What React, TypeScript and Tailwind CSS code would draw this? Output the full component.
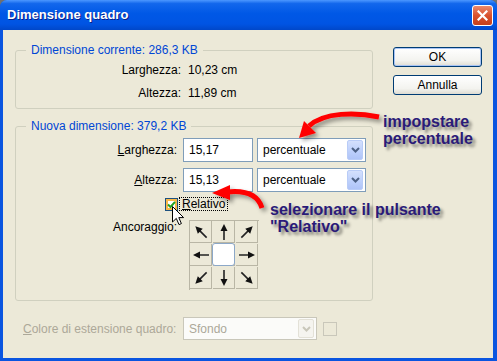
import React from "react";

function Chevron({ color }: { color: string }) {
  return (
    <svg width="9" height="6" viewBox="0 0 9 6">
      <path d="M1 1 L4.5 4.5 L8 1" fill="none" stroke={color} strokeWidth="2" />
    </svg>
  );
}

function Dropdown({ value, disabled, width }: { value: string; disabled?: boolean; width: string }) {
  return (
    <div
      className={
        "flex items-center h-full pl-[5px] pr-[2px] " +
        width +
        (disabled ? " border border-[#C9C7BA] bg-[#fbfbf9] text-[#ACA899]" : " border border-[#7F9DB9] bg-white")
      }
    >
      <span className="flex-1">{value}</span>
      {disabled ? (
        <div className="w-[16px] h-[19px] rounded-[2px] border border-[#E3E1D7] bg-[#F5F4EF] flex items-center justify-center">
          <Chevron color="#C9C7BA" />
        </div>
      ) : (
        <div className="w-[16px] h-[20px] rounded-[2px] border border-[#B9CCF7] bg-[linear-gradient(180deg,#d4e0fd_0%,#bccffb_60%,#afc4f7_100%)] flex items-center justify-center">
          <Chevron color="#4D6185" />
        </div>
      )}
    </div>
  );
}

function AnchorArrow({ rot }: { rot: string }) {
  return (
    <div className="w-[22px] h-[22px] border-r border-b border-[#B9B6A5] flex items-center justify-center">
      <svg width="18" height="18" viewBox="0 0 18 18" className={rot}>
        <line x1="9" y1="17" x2="9" y2="6" stroke="#222" strokeWidth="1.6" />
        <polygon points="9,1 5.5,8 12.5,8" fill="#111" />
      </svg>
    </div>
  );
}

export default function App() {
  return (
    <div className="relative w-[497px] h-[361px] overflow-hidden bg-[#707070] font-['Liberation_Sans',Arial,sans-serif] text-[12px] leading-[14px] text-black">
      <div className="flex flex-col w-full h-full rounded-t-[7px] overflow-hidden bg-[#0a55e0]">
        {/* title bar */}
        <div className="h-[30px] shrink-0 flex items-center pl-[7px] pr-[4px] bg-[linear-gradient(180deg,#4c97ff_0%,#1267ec_12%,#0058e6_45%,#0054e3_80%,#0047c9_100%)]">
          <span className="flex-1 text-white font-bold text-[13px] [text-shadow:1px_1px_0_#0a1e8a]">
            Dimensione quadro
          </span>
          <div className="w-[21px] h-[21px] rounded-[3px] border border-white bg-[linear-gradient(180deg,#eb8a6d_0%,#d9512e_50%,#c53f1b_100%)] flex items-center justify-center">
            <svg width="11" height="11" viewBox="0 0 11 11">
              <path d="M1.5 1.5 L9.5 9.5 M9.5 1.5 L1.5 9.5" stroke="white" strokeWidth="2.2" strokeLinecap="square" />
            </svg>
          </div>
        </div>

        {/* body */}
        <div className="flex-1 ml-[3px] mr-[4px] mb-[3px] bg-[#ECE9D8] flex pl-[12px] pt-[13px]">
          <div className="w-[358px] flex flex-col">
            <fieldset className="border border-[#D0D0BF] rounded-[3px] pb-[7px]">
              <legend className="ml-[10px] px-[5px] text-[#0046D5] leading-[14px]">
                Dimensione corrente: 286,3 KB
              </legend>
              <div className="flex items-center h-[16px] mt-[5px]">
                <span className="w-[165px] text-right">Larghezza:</span>
                <span className="ml-[7px]">10,23 cm</span>
              </div>
              <div className="flex items-center h-[16px] mt-[7px]">
                <span className="w-[165px] text-right">Altezza:</span>
                <span className="ml-[7px]">11,89 cm</span>
              </div>
            </fieldset>

            <fieldset className="mt-[10px] border border-[#D0D0BF] rounded-[3px] pb-[10px]">
              <legend className="ml-[10px] px-[5px] text-[#0046D5] leading-[14px]">
                Nuova dimensione: 379,2 KB
              </legend>
              <div className="flex items-center h-[24px] mt-[5px]">
                <span className="w-[161px] text-right">
                  <span className="underline">L</span>arghezza:
                </span>
                <div className="ml-[6px] w-[70px] h-full border border-[#7F9DB9] bg-white pl-[5px] flex items-center">15,17</div>
                <div className="ml-[4px] h-full">
                  <Dropdown value="percentuale" width="w-[109px]" />
                </div>
              </div>
              <div className="flex items-center h-[24px] mt-[6px]">
                <span className="w-[161px] text-right">
                  <span className="underline">A</span>ltezza:
                </span>
                <div className="ml-[6px] w-[70px] h-full border border-[#7F9DB9] bg-white pl-[5px] flex items-center">15,13</div>
                <div className="ml-[4px] h-full">
                  <Dropdown value="percentuale" width="w-[109px]" />
                </div>
              </div>
              <div className="flex items-center h-[14px] mt-[5px]">
                <div className="ml-[149px] w-[13px] h-[13px] border border-[#1C5180] bg-[#fff] shadow-[inset_0_0_0_2px_#f8b84a] flex items-center justify-center">
                  <svg width="9" height="9" viewBox="0 0 9 9">
                    <path d="M1 4.5 L3.5 7 L8 1.8" fill="none" stroke="#21A121" strokeWidth="2" />
                  </svg>
                </div>
                <span className="ml-[1px] px-[2px] border border-dotted border-black leading-[12px]">
                  <span className="underline">R</span>elativo
                </span>
              </div>
              <div className="flex items-start mt-[9px]">
                <span className="w-[161px] text-right">Ancoraggio:</span>
                <div className="ml-[12px] w-[70px] h-[70px] border-l border-t border-[#B9B6A5] grid grid-cols-3">
                  <AnchorArrow rot="-rotate-45" />
                  <AnchorArrow rot="rotate-0" />
                  <AnchorArrow rot="rotate-45" />
                  <AnchorArrow rot="-rotate-90" />
                  <div className="w-[22px] h-[22px] border-r border-b border-[#B9B6A5]">
                    <div className="w-[23px] h-[23px] -mt-px -ml-px rounded-[3px] border border-[#8CA8C8] bg-white" />
                  </div>
                  <AnchorArrow rot="rotate-90" />
                  <AnchorArrow rot="-rotate-135" />
                  <AnchorArrow rot="rotate-180" />
                  <AnchorArrow rot="rotate-135" />
                </div>
              </div>
            </fieldset>

            <div className="flex items-center h-[23px] mt-[16px] text-[#ACA899]">
              <span className="ml-[8px] w-[160px]">
                <span className="underline">C</span>olore di estensione quadro:
              </span>
              <div className="h-full">
                <Dropdown value="Sfondo" width="w-[134px]" disabled />
              </div>
              <div className="ml-[6px] w-[14px] h-[14px] border border-[#C9C7BA]" />
            </div>
          </div>

          <div className="ml-[20px] pt-[4px] flex flex-col gap-[8px]">
            <button className="w-[89px] h-[20px] rounded-[3px] border border-[#003C74] bg-[linear-gradient(180deg,#ffffff_0%,#f3f3ef_70%,#dedcd2_100%)] shadow-[inset_0_0_0_1px_#a9c4f5] text-[12px]">
              OK
            </button>
            <button className="w-[89px] h-[20px] rounded-[3px] border border-[#003C74] bg-[linear-gradient(180deg,#ffffff_0%,#f3f3ef_70%,#dedcd2_100%)] text-[12px]">
              Annulla
            </button>
          </div>
        </div>
      </div>

      {/* annotations */}
      <svg className="absolute left-0 top-0 pointer-events-none" width="497" height="361" viewBox="0 0 497 361">
        <defs>
          <filter id="sh" x="-20%" y="-20%" width="140%" height="140%">
            <feDropShadow dx="3" dy="3" stdDeviation="2" floodColor="#000" floodOpacity="0.4" />
          </filter>
        </defs>
        <g filter="url(#sh)" fill="#ff0000">
          <path d="M379 117 C356 112 324 112 309 126" fill="none" stroke="#ff0000" strokeWidth="5" />
          <polygon points="299,138 304,121 316,133" />
          <path d="M262 208 C258 195 246 190 227 192" fill="none" stroke="#ff0000" strokeWidth="5" />
          <polygon points="212,193 230,185 230,200" />
        </g>
      </svg>
      <svg className="absolute left-[172px] top-[206px] pointer-events-none" width="14" height="22" viewBox="0 0 14 22">
        <path d="M0.5 0.5 L0.5 16 L4.3 12.4 L7 18.6 L9.4 17.6 L6.8 11.6 L11.6 11.6 Z" fill="white" stroke="black" strokeWidth="1" />
      </svg>
      <div className="absolute left-[383px] top-[113px] text-[16px] leading-[17px] font-bold text-[#2a1a78] [text-shadow:3px_3px_3px_rgba(0,0,0,0.45)]">
        impopstare
        <br />
        percentuale
      </div>
      <div className="absolute left-[270px] top-[201px] text-[16px] leading-[17px] font-bold text-[#2a1a78] [text-shadow:3px_3px_3px_rgba(0,0,0,0.45)]">
        selezionare il pulsante
        <br />
        "Relativo"
      </div>
    </div>
  );
}
